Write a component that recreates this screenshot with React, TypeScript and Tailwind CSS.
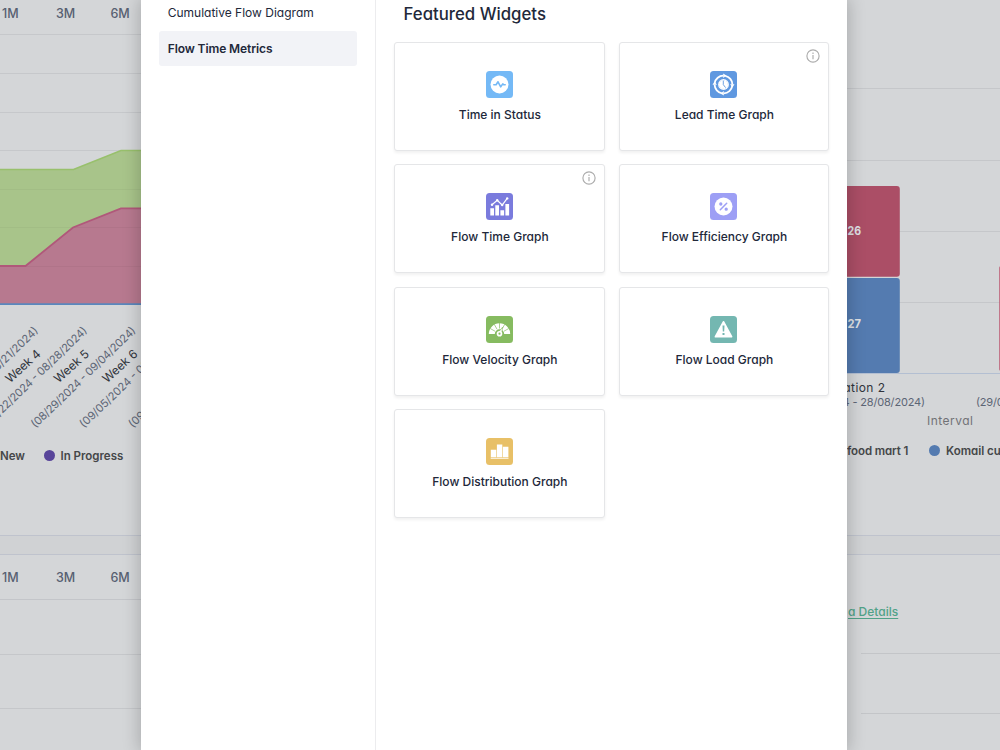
import React from 'react';

const PulseIcon = () => (
  <svg viewBox="0 0 27 27" className="size-[27px]">
    <rect width="27" height="27" rx="3.5" fill="#74b9f6" />
    <circle cx="13.5" cy="13.5" r="9" fill="#fff" />
    <path d="M7.8 13.8h2.300l1.900-3 2.700 5 2.100-2.900.9.9h1.500" fill="none" stroke="#74b9f6" strokeWidth="1.6" strokeLinejoin="round" strokeLinecap="round" />
  </svg>
);

const LeadIcon = () => (
  <svg viewBox="0 0 27 27" className="size-[27px]">
    <rect width="27" height="27" rx="3.5" fill="#5f98e0" />
    <circle cx="13.5" cy="13.5" r="8.9" fill="none" stroke="#fff" strokeWidth="1.8" strokeDasharray="12 1.98" strokeDashoffset="-1.5" />
    <path d="M13.2 2.500l3.200 2.100-3.200 2.300zM24.500 13.200l-2.100 3.200-2.300-3.200zM13.800 24.500l-3.200-2.100 3.200-2.300zM2.500 13.800l2.100-3.200 2.300 3.200z" fill="#fff" />
    <circle cx="13.5" cy="13.5" r="5.4" fill="#fff" />
    <path d="M13.3 9.900v3.700l2 2.700" fill="none" stroke="#5f98e0" strokeWidth=".9" strokeLinecap="round" />
    <circle cx="13.5" cy="13.5" r="4.5" fill="none" stroke="#8fb8ec" strokeWidth=".6" strokeDasharray=".6 1.75" />
  </svg>
);

const TimeIcon = () => (
  <svg viewBox="0 0 27 27" className="size-[27px]">
    <rect width="27" height="27" rx="3.5" fill="#7a7bdd" />
    <path d="M4.3 15.2h3.700v7.400H4.300zM9.300 12.300h3.700v10.300H9.300zM14.400 17.200h3.700v5.400h-3.700zM19.400 11h3.700v11.600h-3.700z" fill="#fff" />
    <path d="M6 11.8l5.2-4.6 5 4.8 5-6.6" fill="none" stroke="#fff" strokeWidth="1.2" />
    <g fill="#fff"><circle cx="6" cy="11.8" r="1.2" /><circle cx="11.2" cy="7.2" r="1.2" /><circle cx="16.2" cy="12" r="1.2" /><circle cx="21.2" cy="5.4" r="1.2" /></g>
  </svg>
);

const EfficiencyIcon = () => (
  <svg viewBox="0 0 27 27" className="size-[27px]">
    <rect width="27" height="27" rx="3.5" fill="#9d9ff5" />
    <circle cx="13.5" cy="13.5" r="9" fill="#fff" />
    <g fill="none" stroke="#9d9ff5" strokeWidth="1.5" strokeLinecap="round">
      <path d="M10.300 16.700l6.400-6.400" /><circle cx="10.800" cy="11" r=".9" /><circle cx="16.200" cy="16.200" r=".9" />
    </g>
  </svg>
);

const VelocityIcon = () => (
  <svg viewBox="0 0 27 27" className="size-[27px]">
    <rect width="27" height="27" rx="3.5" fill="#86bb60" />
    <path d="M2.8 18a10.7 10.7 0 0 1 21.4 0h-6a4.7 4.7 0 0 0-9.4 0z" fill="#fff" />
    <path d="M4.2 12.500l5 2.800M8.200 8.200l2.800 5M13.500 7v5.500M18.800 8.200L16 13.200M22.800 12.500l-5 2.800" stroke="#86bb60" strokeWidth=".7" />
    <path d="M12 16.8L16.7 11l-1.300 7.200z" fill="#fff" stroke="#86bb60" strokeWidth=".6" />
    <circle cx="13.5" cy="17.7" r="2.800" fill="#fff" />
    <circle cx="13.5" cy="17.7" r="1.1" fill="#86bb60" />
  </svg>
);

const LoadIcon = () => (
  <svg viewBox="0 0 27 27" className="size-[27px]">
    <rect width="27" height="27" rx="3.5" fill="#74b7b1" />
    <path d="M13.5 5.900l8 14.800h-16z" fill="#fff" stroke="#fff" strokeWidth="1.8" strokeLinejoin="round" />
    <path d="M12.500 9.500h2l-.3 6h-1.400zM12.500 17h2v2h-2z" fill="#74b7b1" />
  </svg>
);

const DistributionIcon = () => (
  <svg viewBox="0 0 27 27" className="size-[27px]">
    <rect width="27" height="27" rx="3.5" fill="#e8c067" />
    <path d="M4.800 11.800h5.500v7.500H4.800zM10.900 6.600h5.400v12.700h-5.400zM16.900 8.700h5.500v10.600h-5.500z" fill="#fff" />
    <path d="M4.700 20.300h17.800" stroke="#fff" strokeWidth=".9" />
  </svg>
);

const InfoIcon = () => (
  <svg viewBox="0 0 14 14" className="size-[14px]" fill="none" stroke="#acacac" strokeWidth="1.15">
    <circle cx="7" cy="7" r="6.1" />
    <path d="M7 6v4.300M7 3.600v1.400" />
  </svg>
);

const widgets = [
  { name: 'Time in Status', Icon: PulseIcon },
  { name: 'Lead Time Graph', Icon: LeadIcon, info: true },
  { name: 'Flow Time Graph', Icon: TimeIcon, info: true },
  { name: 'Flow Efficiency Graph', Icon: EfficiencyIcon },
  { name: 'Flow Velocity Graph', Icon: VelocityIcon },
  { name: 'Flow Load Graph', Icon: LoadIcon },
  { name: 'Flow Distribution Graph', Icon: DistributionIcon },
];

const weeks = [
  { x: -11, label: 'Week 3', dates: '(08/15/2024 - 08/21/2024)' },
  { x: 38, label: 'Week 4', dates: '(08/22/2024 - 08/28/2024)' },
  { x: 86.5, label: 'Week 5', dates: '(08/29/2024 - 09/04/2024)' },
  { x: 135, label: 'Week 6', dates: '(09/05/2024 - 09/11/2024)' },
  { x: 184, label: '', dates: '(09/12/2024 - 09/18/2024)' },
];

function Ranges() {
  return (
    <div className="flex h-[26px] items-center pl-[2px] pt-[2px] text-[12.5px] font-medium text-[#576071]">
      <span className="w-[54px]">1M</span>
      <span className="w-[54.5px]">3M</span>
      <span>6M</span>
    </div>
  );
}

function FlowChart() {
  return (
    <svg width="141" height="409" viewBox="0 26 141 409" className="block">
      <path d="M0 34.5h141M0 73.5h141M0 112.5h141M0 150.5h141" stroke="#c6c8cb" />
      <path d="M0 169.500h73.500L121 150.500h20V304H0z" fill="#a8c48a" />
      <path d="M0 266h25.500L73 227.500 121 208.300h20V304H0z" fill="#b7798f" />
      <path d="M0 189.500h141M0 227.500h141M0 266.500h141" stroke="#000" strokeOpacity=".035" />
      <path d="M0 169.500h73.500L121 150.500h20" fill="none" stroke="#98c06c" strokeWidth="1.700" />
      <path d="M0 266h25.500L73 227.500 121 208.300h20" fill="none" stroke="#b0587a" strokeWidth="1.800" />
      <path d="M0 304.200h141" stroke="#5987bd" strokeWidth="1.700" />
      {weeks.map((w) => (
        <g key={w.x}>
          {w.label && w.x > 0 && (
            <text transform={`translate(${w.x + 3.5} 355) rotate(-42)`} textAnchor="end" fontSize="12" textLength="42.500" fill="#30343c">{w.label}</text>
          )}
          <text transform={`translate(${w.x + 50} 331.500) rotate(-43.800)`} textAnchor="end" fontSize="11" textLength="140" fill="#5c6575">{w.dates}</text>
        </g>
      ))}
    </svg>
  );
}

function IterationChart() {
  return (
    <svg width="153" height="435" viewBox="847 0 153 435" className="block">
      <path d="M847 88.500h153M847 160.500h153M847 231.500h153M847 302.500h153" stroke="#c5c7ca" />
      <path d="M847 373.500h153" stroke="#b3bfd2" />
      <rect x="820" y="186" width="79.800" height="90.800" rx="3" fill="#ab4e66" />
      <rect x="820" y="278" width="79.800" height="95" rx="3" fill="#547bb0" />
      <rect x="999.200" y="266" width="20" height="105" rx="2" fill="#bd5f77" />
      <g fill="#dfe1e5" fontSize="11.500" fontWeight="700">
        <text x="847.500" y="234.500" textLength="13.500" lengthAdjust="spacingAndGlyphs">26</text>
        <text x="847.500" y="327.500" textLength="13.500" lengthAdjust="spacingAndGlyphs">27</text>
      </g>
      <text x="885" y="392" textAnchor="end" fontSize="12" fill="#30343c" textLength="62">Iteration 2</text>
      <g fontSize="11" fill="#5c6575">
        <text x="925" y="406" textAnchor="end" textLength="140">(22/08/2024 - 28/08/2024)</text>
        <text x="976" y="406" textLength="140">(29/08/2024 - 04/09/2024)</text>
      </g>
      <text x="927" y="425" fontSize="12" fill="#717276" textLength="46">Interval</text>
    </svg>
  );
}

export default function App() {
  return (
    <div className="relative flex h-[750px] w-[1000px] justify-between overflow-hidden bg-[#d4d6d8] [font-family:Inter,'Liberation_Sans',sans-serif] [font-feature-settings:'cv11']">
      <section className="flex w-[141px] flex-col overflow-hidden whitespace-nowrap">
        <Ranges />
        <FlowChart />
        <div className="flex h-[41px] items-center text-[11.5px] font-semibold text-[#454749]">
          <span className="w-[43.5px] pt-[2px]">New</span>
          <span className="size-[11px] rounded-full bg-[#58459a]" />
          <span className="ml-[6px] pt-[2px]">In Progress</span>
        </div>
        <div className="h-[59px]" />
        <div className="h-[20px] border-y border-[#bfc3cd] bg-[#d0d2d4]" />
        <div className="flex h-[45px] items-center border-b border-[#c3c5c9]"><Ranges /></div>
        <div className="h-[55px] border-b border-[#c5c7ca]" />
        <div className="h-[54px] border-b border-[#c5c7ca]" />
      </section>

      <section className="flex w-[153px] flex-col overflow-hidden whitespace-nowrap">
        <IterationChart />
        <div className="flex h-[32px] items-center text-[11.5px] font-semibold text-[#454749]">
          <span className="w-[81.500px] shrink-0 pt-[2px] tracking-[-0.1px]">food mart 1</span>
          <span className="mb-px size-[11px] shrink-0 rounded-full bg-[#547bb0]" />
          <span className="ml-[6.500px] pt-[2px]">Komail custom</span>
        </div>
        <div className="h-[68px]" />
        <div className="h-[20px] border-y border-[#bfc3cd] bg-[#d0d2d4]" />
        <div className="flex h-[98px] items-center pt-[16px]">
          <span className="pl-px text-[12px] font-medium text-[#51a288] underline underline-offset-2">a Details</span>
        </div>
        <div className="ml-[14px] h-[61px] border-y border-[#c3c5c8]" />
      </section>

      <main className="absolute inset-y-0 left-[140.7px] flex w-[706.6px] bg-white text-[#22283a] shadow-[0_0_16px_2px_rgba(0,0,0,0.2)]">
        <nav className="flex w-[235.300px] shrink-0 flex-col border-r border-[#ececee] pl-[18px] text-[12px]">
          <div className="flex h-[31px] items-center pb-[5px] pl-[9px]">Cumulative Flow Diagram</div>
          <div className="flex h-[35px] w-[198.5px] items-center rounded-[3px] bg-[#f2f3f7] pl-[9px] font-semibold tracking-[-0.1px]">Flow Time Metrics</div>
        </nav>
        <section className="flex-1 pl-[18px] pr-[18px]">
          <h2 className="flex h-[42px] items-center pb-[12px] pl-[9.500px] text-[16.8px] font-medium">Featured Widgets</h2>
          <div className="grid grid-cols-2 gap-x-[13.8px] gap-y-[13.35px]">
            {widgets.map(({ name, Icon, info }) => (
              <article key={name} className="relative flex h-[109px] flex-col items-center rounded-[3px] border border-[#e5e6e8] bg-white pt-[28px] shadow-[0_2px_3px_rgba(0,0,0,0.06)]">
                <Icon />
                <span className="mt-[9px] pl-px text-[12px] font-medium leading-[16px]">{name}</span>
                {info && <span className="absolute right-[8px] top-[6px]"><InfoIcon /></span>}
              </article>
            ))}
          </div>
        </section>
      </main>
    </div>
  );
}
